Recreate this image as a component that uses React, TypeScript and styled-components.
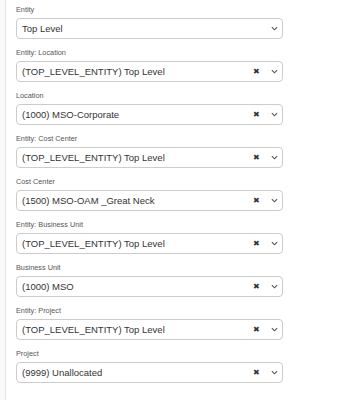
import React from 'react';
import styled, { createGlobalStyle } from 'styled-components';

const GlobalStyle = createGlobalStyle`
    body {
        margin: 0;
        background: #fff;
        font-family: 'Liberation Sans', Arial, sans-serif;
    }
`;

const fields = [
    { label: 'Entity', value: 'Top Level', clear: false },
    { label: 'Entity: Location', value: '(TOP_LEVEL_ENTITY) Top Level', clear: true },
    { label: 'Location', value: '(1000) MSO-Corporate', clear: true },
    { label: 'Entity: Cost Center', value: '(TOP_LEVEL_ENTITY) Top Level', clear: true },
    { label: 'Cost Center', value: '(1500) MSO-OAM _Great Neck', clear: true },
    { label: 'Entity: Business Unit', value: '(TOP_LEVEL_ENTITY) Top Level', clear: true },
    { label: 'Business Unit', value: '(1000) MSO', clear: true },
    { label: 'Entity: Project', value: '(TOP_LEVEL_ENTITY) Top Level', clear: true },
    { label: 'Project', value: '(9999) Unallocated', clear: true },
];

export default function App() {
    return (
        <Page>
            <GlobalStyle />
            <Gutter />
            <Form>
                {fields.map((f) => (
                    <Field key={f.label}>
                        <Label>{f.label}</Label>
                        <Select>
                            <Value>{f.value}</Value>
                            {f.clear && <Clear>✖</Clear>}
                            <Chevron viewBox="0 0 8 5">
                                <path d="M1 1 L4 4 L7 1" fill="none" stroke="#555" strokeWidth="1.3" />
                            </Chevron>
                        </Select>
                    </Field>
                ))}
            </Form>
        </Page>
    );
}

const Page = styled.div`
    display: flex;
    width: 357px;
    height: 400px;
    background: #fff;
`;

const Gutter = styled.div`
    width: 5px;
    background: #f9f9f9;
    border-right: 1px solid #e6e6e6;
`;

const Form = styled.div`
    display: flex;
    flex-direction: column;
    gap: 8px;
    padding: 4px 0 0 10px;
    width: 267px;
`;

const Field = styled.div`
    display: flex;
    flex-direction: column;
    gap: 3px;
`;

const Label = styled.div`
    font-size: 7.3px;
    line-height: 11px;
    color: #555;
`;

const Select = styled.div`
    display: flex;
    align-items: center;
    box-sizing: border-box;
    height: 21px;
    border: 1px solid #ccc;
    border-radius: 4px;
    padding: 0 0 0 5px;
    background: #fff;
`;

const Value = styled.div`
    flex: 1;
    font-size: 9.5px;
    color: #333;
    white-space: nowrap;
`;

const Clear = styled.span`
    font-size: 8px;
    color: #333;
    margin-right: 11px;
`;

const Chevron = styled.svg`
    width: 7px;
    height: 5px;
    margin-right: 4px;
`;
